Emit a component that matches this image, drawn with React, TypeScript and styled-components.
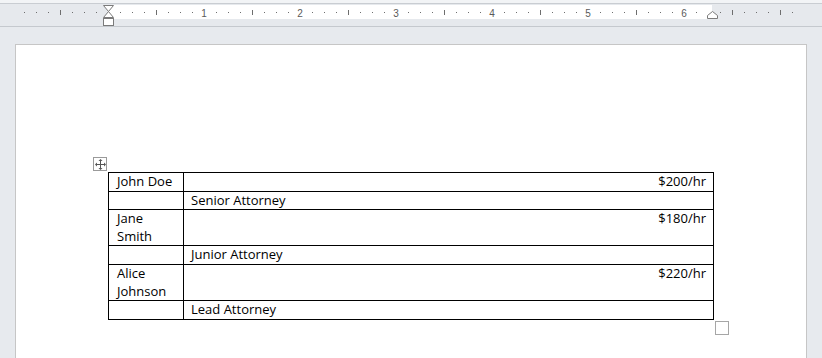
import React from 'react';
import styled, { createGlobalStyle } from 'styled-components';

const GlobalStyle = createGlobalStyle`
  html, body {
    margin: 0;
    padding: 0;
    background: #e7eaee;
  }
  #root {
    width: 822px;
    height: 358px;
    overflow: hidden;
  }
`;

const Screen = styled.div`
  width: 822px;
  height: 358px;
  display: flex;
  flex-direction: column;
  background: #e7eaee;
  overflow: hidden;
`;

const RulerBar = styled.div`
  position: relative;
  height: 27px;
  flex: none;
  box-sizing: border-box;
  padding-top: 5px;
  background: linear-gradient(#f2f4f6 0px, #f2f4f6 3px, #c9cdd2 3px, #c9cdd2 4px, #e6e9ed 4px);
  border-bottom: 1px solid #c5c9ce;
`;

const RulerTrack = styled.div`
  display: flex;
  height: 14px;
`;

const RulerMargin = styled.div<{ $w: number }>`
  width: ${(p) => p.$w}px;
  flex: none;
`;

const RulerBody = styled.div`
  width: 604px;
  flex: none;
  background: #ffffff;
`;

const RulerMarks = styled.svg`
  position: absolute;
  left: 0;
  top: 0;
  width: 822px;
  height: 27px;
`;

const Workspace = styled.div`
  flex: 1;
  padding: 17px 15px 0 15px;
`;

const Page = styled.div`
  width: 792px;
  height: 320px;
  box-sizing: border-box;
  background: #ffffff;
  border: 1px solid #c6c6c6;
  border-bottom: none;
  padding: 127px 0 0 92px;
`;

const TableWrap = styled.div`
  position: relative;
  width: 606px;
`;

const MoveHandle = styled.div`
  position: absolute;
  left: -15px;
  top: -15px;
  width: 12px;
  height: 12px;
  border: 1px solid #9a9a9a;
  background: #ffffff;
  display: flex;
  align-items: center;
  justify-content: center;
`;

const ResizeHandle = styled.div`
  position: absolute;
  right: -15px;
  bottom: -15px;
  width: 12px;
  height: 12px;
  border: 1px solid #a6a6a6;
  background: #ffffff;
`;

const Table = styled.table`
  width: 606px;
  border-collapse: collapse;
  table-layout: fixed;
  font-family: 'Open Sans', 'Liberation Sans', sans-serif;
  font-size: 13px;
  line-height: 17.6px;
  color: #000;
`;

const Cell = styled.td<{ $align?: 'left' | 'right' }>`
  border: 1px solid #000;
  padding: 0 7px 0 8px;
  vertical-align: top;
  text-align: ${(p) => p.$align || 'left'};
  white-space: nowrap;
`;

const NameCell = styled(Cell)`
  white-space: normal;
`;

const RoleCell = styled(Cell)`
  padding-left: 7px;
`;

const lawyers = [
  { name: 'John Doe', rate: '$200/hr', role: 'Senior Attorney' },
  { name: 'Jane Smith', rate: '$180/hr', role: 'Junior Attorney' },
  { name: 'Alice Johnson', rate: '$220/hr', role: 'Lead Attorney' },
];

const Ruler = () => {
  const marks: React.ReactNode[] = [];
  for (let i = -7; i <= 57; i++) {
    const x = 108 + i * 12;
    if (x < 20 || x > 800) continue;
    if (i === 0 || i === 50) continue;
    if (i % 8 === 0) {
      if (i > 0 && i <= 48) {
        marks.push(
          <text key={i} x={x} y={16.5} textAnchor="middle" fontSize="10" fill="#5a5a5a" fontFamily="'Liberation Sans', sans-serif">
            {i / 8}
          </text>
        );
      } else {
        marks.push(<rect key={i} x={x} y={10} width={1} height={5} fill="#6e6e6e" />);
      }
    } else if (i % 4 === 0) {
      marks.push(<rect key={i} x={x} y={10} width={1} height={5} fill="#6e6e6e" />);
    } else {
      marks.push(<rect key={i} x={x} y={12} width={1} height={1} fill="#6e6e6e" />);
    }
  }
  return (
    <RulerBar>
      <RulerTrack>
        <RulerMargin $w={108} />
        <RulerBody />
      </RulerTrack>
      <RulerMarks viewBox="0 0 822 27">
        {marks}
        {/* left indent: first line + hanging + left */}
        <path d="M103.5 5.5 H113.5 L108.5 11.5 Z" fill="#fff" stroke="#7b7b7b" />
        <path d="M108.5 11.5 L113.5 17.5 H103.5 Z" fill="#fff" stroke="#7b7b7b" />
        <rect x={103.5} y={18.5} width={10} height={7} fill="#fff" stroke="#7b7b7b" />
        {/* right indent */}
        <path d="M707.5 18.5 V15.5 L712.5 11.5 L717.5 15.5 V18.5 Z" fill="#fff" stroke="#7b7b7b" />
      </RulerMarks>
    </RulerBar>
  );
};

const MoveIcon = () => (
  <svg width="11" height="11" viewBox="0 0 11 11">
    <path d="M5.5 1 V10 M1 5.5 H10" stroke="#555" strokeWidth="1" />
    <path d="M5.5 0 L3.5 2 H7.5 Z M5.5 11 L3.5 9 H7.5 Z M0 5.5 L2 3.5 V7.5 Z M11 5.5 L9 3.5 V7.5 Z" fill="#555" />
  </svg>
);

export default function App() {
  return (
    <Screen>
      <GlobalStyle />
      <Ruler />
      <Workspace>
        <Page>
          <TableWrap>
            <MoveHandle>
              <MoveIcon />
            </MoveHandle>
            <Table>
              <colgroup>
                <col style={{ width: 75 }} />
                <col />
              </colgroup>
              <tbody>
                {lawyers.map((l) => (
                  <React.Fragment key={l.name}>
                    <tr>
                      <NameCell>{l.name}</NameCell>
                      <Cell $align="right">{l.rate}</Cell>
                    </tr>
                    <tr>
                      <Cell />
                      <RoleCell>{l.role}</RoleCell>
                    </tr>
                  </React.Fragment>
                ))}
              </tbody>
            </Table>
            <ResizeHandle />
          </TableWrap>
        </Page>
      </Workspace>
    </Screen>
  );
}
